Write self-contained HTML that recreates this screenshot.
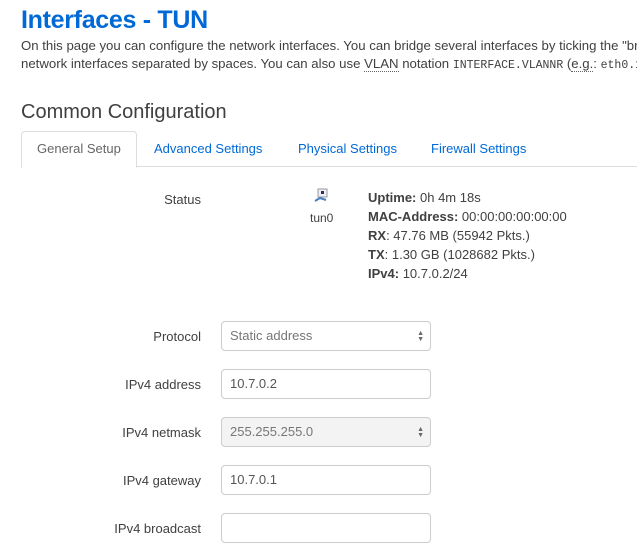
<!DOCTYPE html><html><head><style>
html,body{margin:0;width:637px;height:551px;overflow:hidden}
body{background:#fff;font-family:"Liberation Sans",sans-serif;color:#404040;position:relative}
.a{position:absolute;white-space:nowrap}
h1{position:absolute;left:21px;top:6px;margin:0;font-size:25px;font-weight:bold;color:#0069d6;letter-spacing:-0.3px}
.p{font-size:13.2px;color:#404040}
.mono{font-family:"Liberation Mono",monospace;font-size:11.5px}
.tab{font-size:13px;color:#0069d6}
.lbl{font-size:13px;color:#404040;text-align:right;width:180px;left:21px}
.in{position:absolute;left:221px;border:1px solid #ccc;border-radius:4px;font-size:13px;color:#777;line-height:28px;padding-left:8px;box-sizing:border-box;width:210px;height:30px}
.det{font-size:13px;color:#404040;left:368px}
.arr{position:absolute;right:6px;top:9px;font-size:7px;line-height:6px;color:#666}
</style></head><body>
<h1>Interfaces - TUN</h1>
<div class="a p" style="left:21px;top:38px;width:616px;overflow:hidden">On this page you can configure the network interfaces. You can bridge several interfaces by ticking the "bridge interfaces" field</div>
<div class="a p" style="left:21px;top:56px;width:616px;overflow:hidden">network interfaces separated by spaces. You can also use <span style="border-bottom:1px dotted #666">VLAN</span> notation <span class="mono">INTERFACE.VLANNR</span> (<span style="border-bottom:1px dotted #666">e.g.</span>: <span class="mono">eth0.1</span>).</div>
<div class="a" style="left:21px;top:101px;font-size:20px;color:#404040">Common Configuration</div>
<div class="a" style="left:21px;top:166px;width:616px;border-top:1px solid #ddd"></div>
<div class="a" style="left:21px;top:131px;width:114px;height:35px;border:1px solid #ddd;border-bottom:1px solid #fff;border-radius:4px 4px 0 0;background:#fff"></div>
<div class="a tab" style="left:37px;top:141px;color:#666">General Setup</div>
<div class="a tab" style="left:154px;top:141px">Advanced Settings</div>
<div class="a tab" style="left:298px;top:141px">Physical Settings</div>
<div class="a tab" style="left:431px;top:141px">Firewall Settings</div>
<div class="a lbl" style="top:192px">Status</div>
<svg class="a" style="left:313px;top:188px" width="16" height="16"><rect x="5" y="1" width="9" height="8" fill="#eef" stroke="#999"/><rect x="8" y="3" width="3" height="3" fill="#333"/><path d="M2 13 L7 10 L13 12" stroke="#4a7fc0" stroke-width="2" fill="none"/></svg>
<div class="a" style="left:310px;top:211px;font-size:12px">tun0</div>
<div class="a det" style="top:190px"><b>Uptime:</b> 0h 4m 18s</div>
<div class="a det" style="top:209px"><b>MAC-Address:</b> 00:00:00:00:00:00</div>
<div class="a det" style="top:228px"><b>RX</b>: 47.76 MB (55942 Pkts.)</div>
<div class="a det" style="top:247px"><b>TX</b>: 1.30 GB (1028682 Pkts.)</div>
<div class="a det" style="top:266px"><b>IPv4:</b> 10.7.0.2/24</div>
<div class="a lbl" style="top:329px">Protocol</div>
<div class="in" style="top:321px">Static address<div class="arr">▲<br>▼</div></div>
<div class="a lbl" style="top:377px">IPv4 address</div>
<div class="in" style="top:369px;color:#555">10.7.0.2</div>
<div class="a lbl" style="top:425px">IPv4 netmask</div>
<div class="in" style="top:417px;background:#f3f3f3">255.255.255.0<div class="arr">▲<br>▼</div></div>
<div class="a lbl" style="top:473px">IPv4 gateway</div>
<div class="in" style="top:465px;color:#555">10.7.0.1</div>
<div class="a lbl" style="top:521px">IPv4 broadcast</div>
<div class="in" style="top:513px"></div>
</body></html>
